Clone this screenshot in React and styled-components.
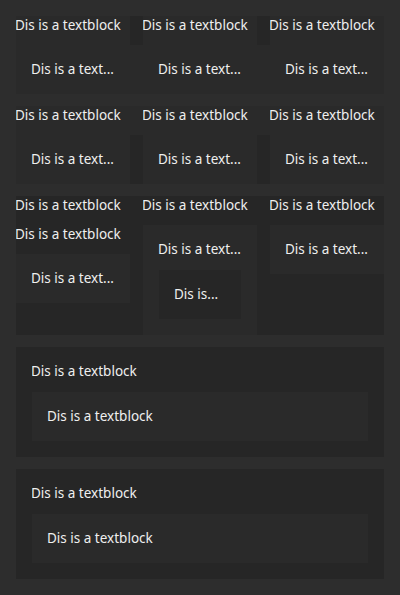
import styled, { createGlobalStyle } from "styled-components";

const tones = {
  page: "#2d2d2d",
  dark: "#262626",
  light: "#2a2a2a",
  none: "transparent",
};

const GlobalStyle = createGlobalStyle`
  html, body {
    margin: 0;
    background: ${tones.page};
  }
  body {
    font-family: "Noto Sans", "Open Sans", sans-serif;
    font-size: 13.5px;
    color: #efefef;
  }
`;

const Page = styled.div`
  width: 400px;
  min-height: 595px;
  box-sizing: border-box;
  padding: 16px;
  display: flex;
  flex-direction: column;
  gap: 12px;
`;

const Stack = styled.div`
  display: flex;
  flex-direction: column;
`;

const Strip = styled.div`
  display: grid;
  grid-template-columns: repeat(3, 1fr);
  column-gap: 13px;
  align-items: stretch;
  background: ${({ $tone = "none" }) => tones[$tone]};
`;

const Column = styled.div`
  display: flex;
  flex-direction: column;
  align-items: stretch;
  min-width: 0;
`;

const Label = styled.div`
  line-height: 18px;
  margin-left: -1px;
  white-space: nowrap;
  overflow: hidden;
`;

const Header = styled(Label)`
  padding-bottom: ${({ $spaced }) => ($spaced ? 12 : 11)}px;
  margin-left: 0;
  text-indent: -1px;
  background: ${({ $tone = "none" }) => tones[$tone]};
`;

const Block = styled.div`
  padding: 15px 16px 16px;
  min-width: 0;
  display: flex;
  flex-direction: column;
  gap: 12px;
  flex: ${({ $grow }) => ($grow ? 1 : "none")};
  background: ${({ $tone = "light" }) => tones[$tone]};
`;

const Panel = styled.div`
  padding: 15px 16px 16px;
  display: flex;
  flex-direction: column;
  background: ${tones.dark};
`;

const TITLE = "Dis is a textblock";
const SHORT = "Dis is a text...";

function HeaderRow({ headerTone, stripTone, contentTone }) {
  return (
    <Stack>
      <Strip $tone={stripTone}>
        {[0, 1, 2].map((i) => (
          <Header key={i} $tone={headerTone}>{TITLE}</Header>
        ))}
      </Strip>
      <Strip $tone={contentTone}>
        {[0, 1, 2].map((i) => (
          <Block key={i}>
            <Label>{SHORT}</Label>
          </Block>
        ))}
      </Strip>
    </Stack>
  );
}

export default function App() {
  return (
    <>
      <GlobalStyle />
      <Page>
        <HeaderRow headerTone="light" stripTone="dark" contentTone="light" />
        <HeaderRow headerTone="light" stripTone="light" contentTone="dark" />

        <Strip $tone="dark">
          <Column>
            <Header>{TITLE}</Header>
            <Header>{TITLE}</Header>
            <Block>
              <Label>{SHORT}</Label>
            </Block>
          </Column>
          <Column>
            <Header>{TITLE}</Header>
            <Block $grow>
              <Label>{SHORT}</Label>
              <Block $tone="dark">
                <Label>Dis is...</Label>
              </Block>
            </Block>
          </Column>
          <Column>
            <Header>{TITLE}</Header>
            <Block>
              <Label>{SHORT}</Label>
            </Block>
          </Column>
        </Strip>

        {[0, 1].map((i) => (
          <Panel key={i}>
            <Header $spaced>{TITLE}</Header>
            <Block>
              <Label>{TITLE}</Label>
            </Block>
          </Panel>
        ))}
      </Page>
    </>
  );
}
